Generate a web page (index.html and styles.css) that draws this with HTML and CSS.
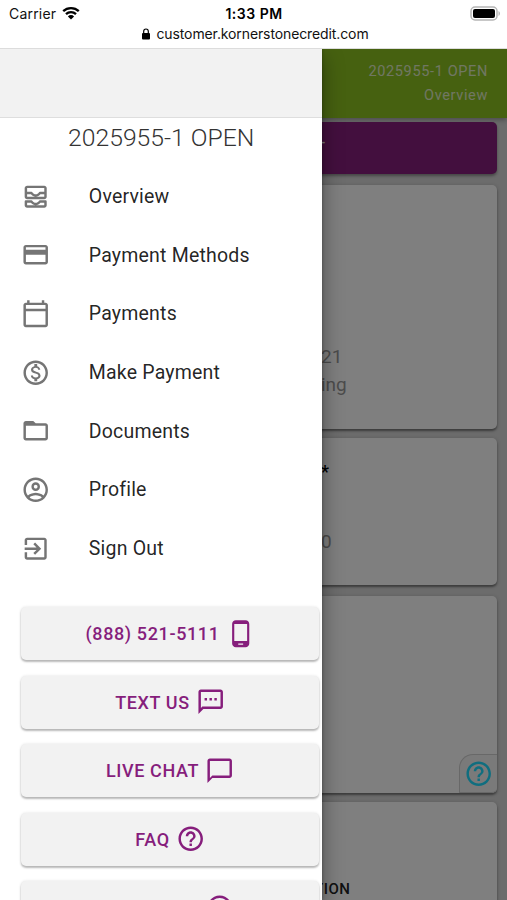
FILE: index.html
```
<!DOCTYPE html>
<html lang="en">
<head>
<meta charset="utf-8">
<title>Overview</title>
<link rel="stylesheet" href="styles.css">
</head>
<body>

<div class="statusbar">
    <div class="status-row">
        <div class="carrier">
            <span>Carrier</span>
            <svg class="wifi" viewBox="0 0 18 14">
                <path d="M1.2 5.2a11.2 11.2 0 0 1 15.6 0M4 8.2a7.2 7.2 0 0 1 10 0" fill="none" stroke="#000" stroke-width="2.3"/>
                <path d="M9 13.6L5.9 10.4a4.4 4.4 0 0 1 6.2 0z"/>
            </svg>
        </div>
        <div class="time">1:33 PM</div>
        <div class="battery-box">
            <svg class="battery" viewBox="0 0 31 15">
                <rect x="1" y="1" width="26" height="13" rx="4" fill="#fff" stroke="#b5b5b5" stroke-width="1.5"/>
                <rect x="3" y="3" width="22" height="9" rx="2"/>
                <path d="M28.500 5v5c1.9-.8 1.9-4.200 0-5z" fill="#b5b5b5"/>
            </svg>
        </div>
    </div>
    <div class="url-row">
        <svg class="lock" viewBox="0 0 8 12">
            <rect x="0" y="5" width="8" height="6.500" rx="1"/>
            <path d="M1.700 5.500V3.300a2.300 2.300 0 0 1 4.600 0v2.200" fill="none" stroke="#000" stroke-width="1.200"/>
        </svg>
        <span>customer.kornerstonecredit.com</span>
    </div>
</div>

<div class="screen">
    <!-- page under the menu -->
    <div class="page">
        <div class="topbar">
            <div>2025955-1 OPEN</div>
            <div>Overview</div>
        </div>
        <div class="pay-button"><span>-</span></div>
        <div class="card card-loan">
            <div>21</div>
            <div>ing</div>
        </div>
        <div class="card card-amount">
            <div class="star">*</div>
            <div>0</div>
        </div>
        <div class="card card-help">
            <div class="help">
                <svg class="icon" viewBox="0 0 24 24"><path d="M11 18h2v-2h-2v2zm1-16C6.480 2 2 6.480 2 12s4.480 10 10 10 10-4.480 10-10S17.520 2 12 2zm0 18c-4.410 0-8-3.590-8-8s3.590-8 8-8 8 3.590 8 8-3.590 8-8 8zm0-14c-2.210 0-4 1.790-4 4h2c0-1.100.9-2 2-2s2 .9 2 2c0 2-3 1.750-3 5h2c0-2.250 3-2.500 3-5 0-2.210-1.790-4-4-4z"/></svg>
            </div>
        </div>
        <div class="card card-info">
            <div class="info-title">TION</div>
        </div>
    </div>

    <div class="backdrop"></div>

    <div class="drawer">
        <div class="drawer-top"></div>
        <div class="account">2025955-1 OPEN</div>
        <ul class="menu">
            <li>
                <svg class="icon" viewBox="0 0 24 24"><path d="M19 3H5c-1.100 0-2 .9-2 2v7c0 1.100.9 2 2 2h14c1.100 0 2-.9 2-2V5c0-1.100-.9-2-2-2zM5 5h14v3h-3.560c-.36 0-.68.190-.86.500-.55.900-1.530 1.500-2.580 1.500S9.970 9.400 9.420 8.500C9.240 8.190 8.920 8 8.560 8H5V5zm14 7H5v-2h3.130c.91 1.220 2.340 2 3.870 2s2.960-.78 3.870-2H19v2zm1 3h-4.560c-.36 0-.68.190-.86.500-.55.900-1.530 1.500-2.580 1.500s-2.030-.6-2.580-1.500c-.18-.31-.5-.5-.86-.5H4c-.55 0-1 .45-1 1v3c0 1.100.9 2 2 2h14c1.100 0 2-.9 2-2v-3c0-.55-.45-1-1-1zm-1 4H5v-2h3.130c.91 1.220 2.340 2 3.870 2s2.960-.78 3.870-2H19v2z"/></svg>
                <span>Overview</span>
            </li>
            <li>
                <svg class="icon" viewBox="0 0 24 24"><path d="M20 4H4c-1.110 0-1.990.89-1.990 2L2 18c0 1.110.89 2 2 2h16c1.110 0 2-.89 2-2V6c0-1.110-.89-2-2-2zm0 14H4v-6h16v6zm0-10H4V6h16v2z"/></svg>
                <span>Payment Methods</span>
            </li>
            <li>
                <svg class="icon" viewBox="0 0 24 24"><path d="M20 3h-1V1h-2v2H7V1H5v2H4c-1.100 0-2 .9-2 2v16c0 1.100.9 2 2 2h16c1.100 0 2-.9 2-2V5c0-1.100-.9-2-2-2zm0 18H4V10h16v11zm0-13H4V5h16v3z"/></svg>
                <span>Payments</span>
            </li>
            <li>
                <svg class="icon" viewBox="0 0 24 24"><path d="M12 2C6.480 2 2 6.480 2 12s4.480 10 10 10 10-4.480 10-10S17.520 2 12 2zm0 18c-4.410 0-8-3.590-8-8s3.590-8 8-8 8 3.590 8 8-3.590 8-8 8zm.31-8.860c-1.770-.45-2.340-.94-2.340-1.670 0-.84.79-1.430 2.100-1.430 1.380 0 1.900.66 1.940 1.640h1.710c-.05-1.340-.87-2.570-2.490-2.970V5H10.900v1.690c-1.510.32-2.720 1.300-2.720 2.810 0 1.790 1.490 2.690 3.660 3.210 1.950.46 2.340 1.150 2.340 1.870 0 .53-.39 1.390-2.100 1.390-1.600 0-2.230-.72-2.320-1.640H8.040c.1 1.700 1.360 2.660 2.860 2.970V19h2.340v-1.670c1.520-.29 2.720-1.160 2.730-2.770-.01-2.200-1.900-2.960-3.660-3.420z"/></svg>
                <span>Make Payment</span>
            </li>
            <li>
                <svg class="icon" viewBox="0 0 24 24"><path d="M20 6h-8l-2-2H4c-1.100 0-1.990.9-1.990 2L2 18c0 1.100.9 2 2 2h16c1.100 0 2-.9 2-2V8c0-1.100-.9-2-2-2zm0 12H4V8h16v10z"/></svg>
                <span>Documents</span>
            </li>
            <li>
                <svg class="icon" viewBox="0 0 24 24"><path d="M12 2C6.480 2 2 6.480 2 12s4.480 10 10 10 10-4.480 10-10S17.520 2 12 2zM7.070 18.280c.43-.9 3.050-1.780 4.930-1.780s4.510.88 4.930 1.780C15.570 19.360 13.860 20 12 20s-3.570-.64-4.930-1.720zm11.290-1.450c-1.430-1.740-4.900-2.330-6.360-2.330s-4.930.59-6.360 2.330C4.620 15.490 4 13.820 4 12c0-4.410 3.590-8 8-8s8 3.590 8 8c0 1.820-.62 3.490-1.640 4.830zM12 6c-1.940 0-3.500 1.560-3.500 3.500S10.060 13 12 13s3.500-1.560 3.500-3.500S13.940 6 12 6zm0 5c-.83 0-1.500-.67-1.500-1.500S11.170 8 12 8s1.500.67 1.500 1.500S12.830 11 12 11z"/></svg>
                <span>Profile</span>
            </li>
            <li>
                <svg class="icon" viewBox="0 0 24 24"><path d="M10.090 15.590L11.500 17l5-5-5-5-1.410 1.410L12.670 11H3v2h9.670l-2.580 2.590zM19 3H5c-1.110 0-2 .9-2 2v4h2V5h14v14H5v-4H3v4c0 1.100.89 2 2 2h14c1.100 0 2-.9 2-2V5c0-1.100-.9-2-2-2z"/></svg>
                <span>Sign Out</span>
            </li>
        </ul>
        <div class="actions">
            <a class="btn">
                <span>(888) 521-5111</span>
                <svg class="icon" viewBox="0 0 24 24"><path d="M16 1H8C6.340 1 5 2.340 5 4v16c0 1.660 1.340 3 3 3h8c1.660 0 3-1.340 3-3V4c0-1.660-1.340-3-3-3zm-2 20h-4v-1h4v1zm3.250-3H6.750V4h10.500v14z"/></svg>
            </a>
            <a class="btn">
                <span>TEXT US</span>
                <svg class="icon" viewBox="0 0 24 24"><path d="M20 2H4c-1.100 0-2 .9-2 2v18l4-4h14c1.100 0 2-.9 2-2V4c0-1.100-.9-2-2-2zm0 14H5.170L4 17.170V4h16v12zM7 9h2v2H7V9zm4 0h2v2h-2V9zm4 0h2v2h-2V9z"/></svg>
            </a>
            <a class="btn">
                <span>LIVE CHAT</span>
                <svg class="icon" viewBox="0 0 24 24"><path d="M20 2H4c-1.100 0-2 .9-2 2v18l4-4h14c1.100 0 2-.9 2-2V4c0-1.100-.9-2-2-2zm0 14H6l-2 2V4h16v12z"/></svg>
            </a>
            <a class="btn">
                <span>FAQ</span>
                <svg class="icon" viewBox="0 0 24 24"><path d="M11 18h2v-2h-2v2zm1-16C6.480 2 2 6.480 2 12s4.480 10 10 10 10-4.480 10-10S17.520 2 12 2zm0 18c-4.410 0-8-3.590-8-8s3.590-8 8-8 8 3.590 8 8-3.590 8-8 8zm0-14c-2.210 0-4 1.790-4 4h2c0-1.100.9-2 2-2s2 .9 2 2c0 2-3 1.750-3 5h2c0-2.250 3-2.500 3-5 0-2.210-1.790-4-4-4z"/></svg>
            </a>
            <a class="btn btn-last">
                <svg class="icon" viewBox="0 0 24 24"><path d="M12 2C6.480 2 2 6.480 2 12s4.480 10 10 10 10-4.480 10-10S17.520 2 12 2zm0 18c-4.410 0-8-3.590-8-8s3.590-8 8-8 8 3.590 8 8-3.590 8-8 8z"/></svg>
            </a>
        </div>
    </div>
</div>

</body>
</html>
```
FILE: styles.css
```
*{
    box-sizing: border-box;
}
body{
    margin: 0;
    height: 900px;
    display: flex;
    flex-direction: column;
    overflow: hidden;
    background: #fff;
    font-family: Roboto, sans-serif;
}
.icon{
    width: 29.4px;
    height: 29.4px;
    flex: none;
    fill: currentColor;
}

/* status bar */
.statusbar{
    height: 49px;
    flex: none;
    padding: 4px 6px 0 9px;
    border-bottom: 1px solid #dcdcdc;
    font-family: Inter, sans-serif;
    font-size: 14px;
    line-height: 20px;
    color: #111;
}
.status-row{
    display: grid;
    grid-template-columns: 1fr auto 1fr;
}
.carrier{
    display: flex;
    align-items: center;
    gap: 6px;
    letter-spacing: .2px;
}
.wifi{
    width: 18px;
    height: 14px;
    margin-top: -2px;
}
.time{
    padding-right: 2px;
    font-weight: 600;
    letter-spacing: .5px;
    color: #000;
}
.battery-box{
    display: flex;
    justify-content: flex-end;
    align-items: center;
}
.battery{
    width: 31px;
    height: 15px;
    margin-top: -1px;
}
.url-row{
    padding-left: 1px;
    display: flex;
    align-items: center;
    justify-content: center;
    gap: 6px;
    letter-spacing: -.11px;
}
.lock{
    width: 8px;
    height: 12px;
}

.screen{
    position: relative;
    flex: 1;
    overflow: hidden;
}

/* page */
.page{
    height: 100%;
    background: #d8d8d8;
    overflow: hidden;
}
.topbar{
    height: 69px;
    padding: 11px 19px 0 0;
    background: #8cc220;
    box-shadow: 0 2px 5px rgba(0,0,0,.3);
    color: #fff;
    font-size: 14.500px;
    line-height: 23.500px;
    letter-spacing: .65px;
    text-align: right;
}
.topbar div{
    color: #f4f8ea;
    opacity: .82;
}
.pay-button{
    height: 52px;
    margin: 4px 10px 11px;
    padding: 9px 0 0 310px;
    border-radius: 5px;
    background: #861e7c;
    box-shadow: 0 2px 3px rgba(0,0,0,.35);
    color: #fff;
    font-size: 18px;
    line-height: 21px;
}
.card{
    margin: 0 10px 10px;
    padding-left: 311px;
    border-radius: 5px;
    background: #fff;
    box-shadow: 0 2px 2px rgba(0,0,0,.35), 0 1px 4px rgba(0,0,0,.2);
    color: #999;
    font-size: 19px;
    line-height: 28px;
}
.card-loan{
    height: 244px;
    margin-bottom: 9px;
    padding-top: 158px;
}
.card-amount{
    height: 147px;
    margin-bottom: 11px;
    padding-top: 20px;
}
.star{
    height: 70px;
    color: #000;
    font-weight: 500;
    font-size: 18px;
}
.card-help{
    height: 197px;
    margin-bottom: 9px;
    display: flex;
    justify-content: flex-end;
    align-items: flex-end;
}
.help{
    width: 38px;
    height: 39px;
    padding-left: 1px;
    display: flex;
    align-items: center;
    justify-content: center;
    border: 1px solid #d0d0d0;
    border-right: 0;
    border-radius: 14px 0 5px 0;
    background: #f4f4f4;
    color: #20dcff;
}
.card-info{
    height: 200px;
    padding: 73px 0 0 304px;
}
.info-title{
    color: #222;
    font-size: 15px;
    font-weight: 500;
    letter-spacing: .5px;
}
.backdrop{
    position: absolute;
    inset: 0;
    background: rgba(0,0,0,.5);
}

/* menu */
.drawer{
    position: absolute;
    top: 0;
    left: 0;
    width: 322.400px;
    height: 100%;
    overflow: hidden;
    background: #fff;
    box-shadow: 0 8px 20px rgba(0,0,0,.4), 0 0 3px rgba(0,0,0,.3);
}
.drawer-top{
    height: 69px;
    background: #f2f2f2;
    border-bottom: 1px solid #dedede;
}
.account{
    height: 49.200px;
    padding-top: 4px;
    color: #333;
    font-size: 24.700px;
    font-weight: 300;
    line-height: 32px;
    text-align: center;
}
.menu{
    list-style: none;
    margin: 0;
    padding: 0;
}
.menu li{
    height: 58.640px;
    padding-left: 20.500px;
    display: flex;
    align-items: center;
    gap: 38.900px;
    color: rgba(0,0,0,.87);
    font-size: 19.500px;
    letter-spacing: .2px;
}
.menu .icon{
    color: #757575;
}
.actions{
    display: flex;
    flex-direction: column;
    gap: 15.500px;
    padding: 29.500px 3px 0 21px;
}
.btn{
    height: 53px;
    flex: none;
    display: flex;
    align-items: center;
    justify-content: center;
    gap: 6px;
    border-radius: 5px;
    background: #f2f2f2;
    box-shadow: 0 2px 2px rgba(0,0,0,.25), 0 0 3px rgba(0,0,0,.12);
    color: #861e7c;
    font-size: 18px;
    font-weight: 500;
    letter-spacing: .62px;
}
.btn-last{
    padding-left: 99px;
}
```
